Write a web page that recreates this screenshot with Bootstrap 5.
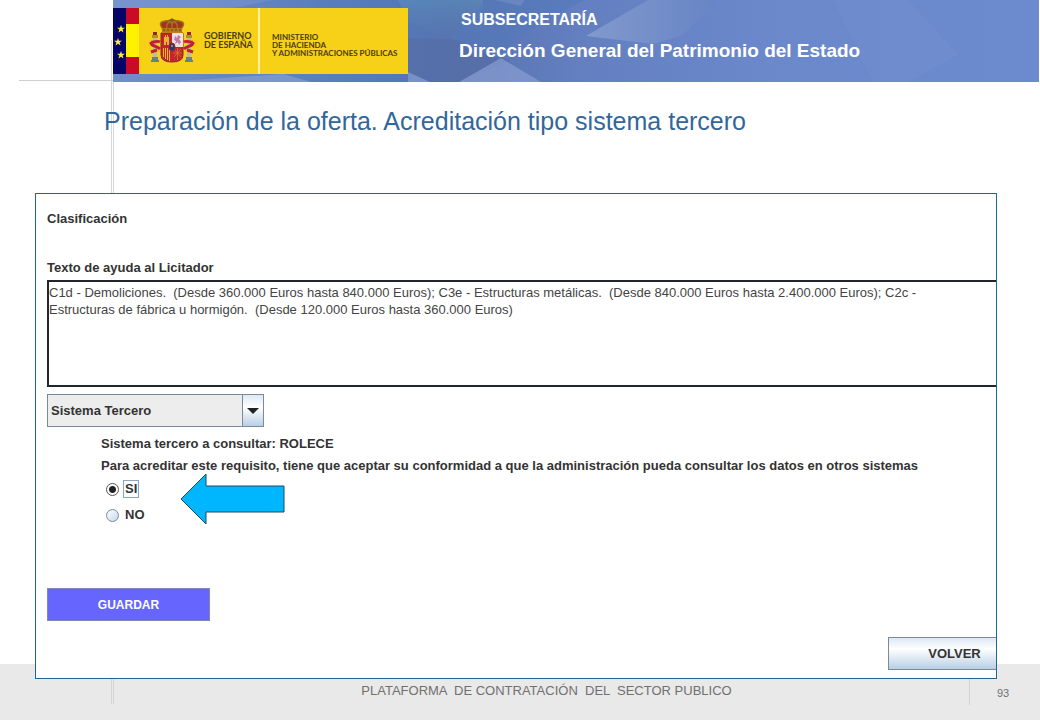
<!DOCTYPE html>
<html lang="es">
<head>
<meta charset="utf-8">
<meta name="viewport" content="width=device-width, initial-scale=1">
<title>Preparación de la oferta. Acreditación tipo sistema tercero</title>
<link href="https://cdn.jsdelivr.net/npm/bootstrap@5.3.0/dist/css/bootstrap.min.css" rel="stylesheet">
<style>
  body { font-family: "Liberation Sans", Arial, sans-serif; font-size: 13px; line-height: 17px; color: #333; background: #fff; }
  .slide { isolation: isolate; }
  .banner { height: 82px; margin-left: 113px; margin-right: 1px; background: #6c8bcd; color: #fff; }
  .banner-art { inset: 0; width: 100%; height: 100%; }
  .gov-logo { width: 295px; height: 66px; margin-top: 8px; background: #f7d117; color: #4a3c10; font-family: Lato, sans-serif; font-weight: 700; font-size: 8px; line-height: 8px; }
  .gov-name { width: 54px; padding-top: 23px; font-size: 9px; line-height: 9px; }
  .gov-ministry { border-left: 2px solid #fdf0a0; padding: 25px 0 0 12px; }
  .unit-names { margin-left: 51px; }
  .unit-top { font-size: 16px; line-height: 20px; margin-top: 10px; padding-left: 2px; }
  .unit-main { font-size: 19px; line-height: 20px; margin-top: 11px; }
  .guide-v { left: 111px; top: 40px; bottom: 16px; width: 3px; border: solid #d3d6dc; border-width: 0 1px; z-index: -1; }
  .guide-h { left: 19px; top: 80px; width: 94px; height: 1px; background: #cfcfcf; z-index: -1; }
  .slide-title { font-size: 25px; line-height: 30px; margin: 24px 0 57px 104px; color: #336699; }
  .panel { margin: 0 43px -15px 35px; border: 1px solid #1f6699; background: #fff; padding: 16px 0 8px 11px; }
  .section-name { font-size: 13px; line-height: 17px; }
  .help-box { height: 107px; padding: 2px 48px 3px 0; border: 2px solid #23252e; border-right: 0; border-radius: 0; resize: none; font-size: 13px; line-height: 17px; color: #444; overflow: hidden; }
  .system-select { width: 217px; height: 33px; margin-top: 7px; padding: 0 28px 0 3px; border: 1px solid #7a8a99; border-radius: 0; font-size: 13px; line-height: 17px; font-weight: 700; color: #333;
    background-color: #ededed;
    background-image: url("data:image/svg+xml,%3Csvg xmlns='http://www.w3.org/2000/svg' viewBox='0 0 12 6'%3E%3Cpath d='M0 0h12L6 6z' fill='%23222'/%3E%3C/svg%3E"), linear-gradient(#7a8a99, #7a8a99), linear-gradient(#dde8f3, #fff 40%, #b8cfe5);
    background-size: 12px 6px, 1px 100%, 20px 100%; background-position: right 4px center, right 20px top, right 0 top; background-repeat: no-repeat; }
  .consult { margin: 6px 0 0 54px; line-height: 22px; }
  .answers { padding-left: 5px; gap: 8px; margin-top: 3px; }
  .answer { gap: 4px; height: 18px; }
  .answer input { width: 13px; height: 13px; margin: 0; border: 1px solid #7a8a99; background: linear-gradient(135deg, #fff, #c3d8ee); }
  .answer input:checked { border-color: #555; background: radial-gradient(circle, #222 0 3px, #fff 4px); }
  .answer label { line-height: 16px; padding: 0 1px; border: 1px solid transparent; }
  .answer input:checked + label { border-color: #8aa5c4; }
  .pointer { width: 105px; height: 52px; left: 144px; top: 279px; }
  .btn-save { width: 163px; height: 33px; margin-top: 64px; border: 1px solid #8585b5; border-radius: 0; background: #6666ff; color: #fff; font-size: 12px; font-weight: 700; padding: 0; }
  .btn-back { width: 108px; height: 33px; margin-top: 16px; padding: 0 0 0 24px; border: 1px solid #7a8a99; border-right: 0; border-radius: 0; background: linear-gradient(#dde8f3, #fff 35%, #b8cfe5); color: #333; font-size: 13px; font-weight: 700; }
  .page-foot { min-height: 56px; background: #e9e9e9; color: #707070; font-size: 13px; line-height: 16px; z-index: -2; }
  .foot-text { padding: 19px 0 0 124px; white-space: pre; }
  .page-no { width: 71px; margin-top: 15px; padding: 6px 0 0 27px; height: 26px; border-left: 1px solid #d3d3d3; font-size: 11px; }
</style>
</head>
<body>
<div class="slide position-relative d-flex flex-column min-vh-100">
  <div class="guide-v position-absolute"></div>
  <div class="guide-h position-absolute"></div>

  <header class="banner position-relative d-flex align-items-start">
    <svg class="banner-art position-absolute" viewBox="0 0 926 82" preserveAspectRatio="none" aria-hidden="true">
      <defs>
        <linearGradient id="sky"><stop offset="0" stop-color="#718ec9"/><stop offset=".3" stop-color="#5379b8"/><stop offset=".38" stop-color="#5873ae"/><stop offset=".5" stop-color="#637fc0"/><stop offset=".7" stop-color="#6a88ca"/><stop offset="1" stop-color="#6c8bcf"/></linearGradient>
        <linearGradient id="facet"><stop offset="0" stop-color="#8ba2d0"/><stop offset="1" stop-color="#6784c4"/></linearGradient>
        <linearGradient id="shade" x2="0" y2="1"><stop offset="0" stop-color="#5b9bc0" stop-opacity=".4"/><stop offset="1" stop-color="#5b73ab" stop-opacity=".2"/></linearGradient>
      </defs>
      <path fill="url(#sky)" d="M0 0h926v82H0z"/>
      <path fill="url(#shade)" d="M285 0h85v31l-32 8-43-17z"/>
      <path fill="#566da7" opacity=".75" d="M295 38l42 1 60 22-50 21h-52z"/>
      <path fill="#5479bb" opacity=".6" d="M374 0h97l-64 35-20 24-50-22z"/>
      <path fill="#7993c8" opacity=".5" d="M382 0h30l-4 6z"/>
      <path fill="url(#facet)" opacity=".75" d="M473 36l62-36h68l-33 35-30 9z"/>
      <path fill="#879ed1" opacity=".7" d="M346 82l42-24 40 24zM295 72l22 10h-22zM50 82l120-8 28 8z"/>
      <path fill="#8ba3d6" opacity=".3" d="M0 0h160l-40 8H0z"/>
      <path fill="#8ba3d6" opacity=".1" d="M720 0h75l50 55-50 27h-35z"/>
    </svg>
    <div class="gov-logo position-relative d-flex flex-shrink-0 overflow-hidden">
      <svg width="91" height="66" viewBox="0 0 91 66" class="flex-shrink-0" role="img" aria-label="Escudo de España">
        <defs><path id="star" fill="#ffe94a" d="M0-4l1 2.8h3L1.6.6l.9 2.900L0 1.800l-2.500 1.700.9-2.900L-4-1.200h3z"/></defs>
        <path fill="#050568" d="M0 0h13v66H0z"/>
        <path fill="#cb0a28" d="M13 0h13v66H13z"/><path fill="#fff200" d="M13 16h13v33H13z"/>
        <use href="#star" x="8" y="21"/><use href="#star" x="5" y="34"/><use href="#star" x="8" y="47"/>
        <!-- pillars of Hercules -->
        <path fill="#b9bea5" d="M40 29h4v23h-4zM74 29h4v23h-4z"/>
        <path fill="#b49121" d="M39 27h6v3h-6zM73 27h6v3h-6z"/>
        <path fill="#8c2a22" d="M40 24h4v3h-4zM74 24h4v3h-4z"/>
        <path fill="#66808f" d="M38 52h8v2h-8zM72 52h8v2h-8zM39 49h6v3h-6zM73 49h6v3h-6z"/>
        <path fill="none" stroke="#c61f35" stroke-width="3" d="M47 34c-3-2-6 1-9 0M38 34c-1 4 6 4 9 7M38 44l6-2M71 34c3-2 6 1 9 0M80 34c1 4-6 4-9 7M80 44l-6-2"/>
        <!-- quartered shield -->
        <path fill="#c3252f" stroke="#8a2620" d="M48 25h22v22q0 7-11 7t-11-7z"/>
        <path fill="#ede0df" d="M59 25h11v14H59z"/>
        <path fill="#e2b52a" d="M51 37v-8h1v-2h1v2h1v-2h1v2h1v8h-2v-3h-1v3z"/>
        <path fill="#bf79aa" d="M62 28l2 2 1-3 3 2-2 2 2 3-2 3-1-3-3 2 1-3-2-1z"/>
        <path fill="none" stroke="#eebb20" d="M50.500 40v9M52.500 40v11M54.500 40v12M56.500 40v13"/>
        <path fill="none" stroke="#d88027" stroke-width=".7" d="M61 41l7 8M68 41l-7 8M64.500 40v12M60 45h9"/>
        <ellipse cx="59" cy="39" rx="3" ry="4" fill="#203b78" stroke="#9a2432"/>
        <circle cx="59" cy="38" r="1" fill="#c5a63d"/>
        <!-- royal crown -->
        <path fill="#a6302b" d="M49 21l-2-5 4-3 8-2 8 2 4 3-2 5z"/>
        <path fill="none" stroke="#9a7615" stroke-width="1.500" d="M50 21q-6-7 2-8 5-1 7 3 2-4 7-3 8 1 2 8M54 21q-2-6 5-8 7 2 5 8M59 13v8"/>
        <path fill="#a77e18" d="M49 20h20v4H49z"/><path fill="none" stroke="#a52b25" stroke-dasharray="2 2" d="M50 22h18"/>
        <path fill="none" stroke="#715a16" d="M59 10v4M57.500 11.500h3"/>
      </svg>
      <div class="gov-name text-nowrap flex-shrink-0">GOBIERNO<br>DE ESPAÑA</div>
      <div class="gov-ministry text-nowrap">MINISTERIO<br>DE HACIENDA<br>Y ADMINISTRACIONES PÚBLICAS</div>
    </div>
    <div class="unit-names position-relative fw-bold text-nowrap">
      <div class="unit-top">SUBSECRETARÍA</div>
      <div class="unit-main">Dirección General del Patrimonio del Estado</div>
    </div>
  </header>

  <h1 class="slide-title fw-normal">Preparación de la oferta. Acreditación tipo sistema tercero</h1>

  <main class="panel position-relative flex-grow-1 d-flex flex-column">
    <h2 class="section-name fw-bold m-0">Clasificación</h2>
    <label for="help" class="fw-bold mt-4 pt-2 pb-1">Texto de ayuda al Licitador</label>
    <textarea id="help" class="help-box w-100 form-control" readonly>C1d - Demoliciones.  (Desde 360.000 Euros hasta 840.000 Euros); C3e - Estructuras metálicas.  (Desde 840.000 Euros hasta 2.400.000 Euros); C2c - Estructuras de fábrica u hormigón.  (Desde 120.000 Euros hasta 360.000 Euros)</textarea>
    <select class="form-select system-select" aria-label="Sistema"><option>Sistema Tercero</option></select>
    <div class="consult fw-bold">
      <div>Sistema tercero a consultar: ROLECE</div>
      <div id="ask">Para acreditar este requisito, tiene que aceptar su conformidad a que la administración pueda consultar los datos en otros sistemas</div>
      <div class="answers d-flex flex-column" role="radiogroup" aria-labelledby="ask">
        <div class="answer d-flex align-items-center"><input class="form-check-input" type="radio" name="ok" id="yes" checked><label for="yes">SI</label></div>
        <div class="answer d-flex align-items-center"><input class="form-check-input" type="radio" name="ok" id="no"><label for="no">NO</label></div>
      </div>
    </div>
    <svg class="pointer position-absolute" viewBox="0 0 105 52" aria-hidden="true"><path d="M1 26L26 1v12h78v26H26v12z" fill="#00b7ff" stroke="#1c4a60"/></svg>
    <button type="button" class="btn btn-save">GUARDAR</button>
    <button type="button" class="btn btn-back align-self-end">VOLVER</button>
  </main>

  <footer class="page-foot position-relative d-flex">
    <div class="foot-text flex-grow-1 text-center">PLATAFORMA  DE CONTRATACIÓN  DEL  SECTOR PUBLICO</div>
    <div class="page-no">93</div>
  </footer>
</div>
<script src="https://cdn.jsdelivr.net/npm/bootstrap@5.3.0/dist/js/bootstrap.bundle.min.js"></script>
</body>
</html>
